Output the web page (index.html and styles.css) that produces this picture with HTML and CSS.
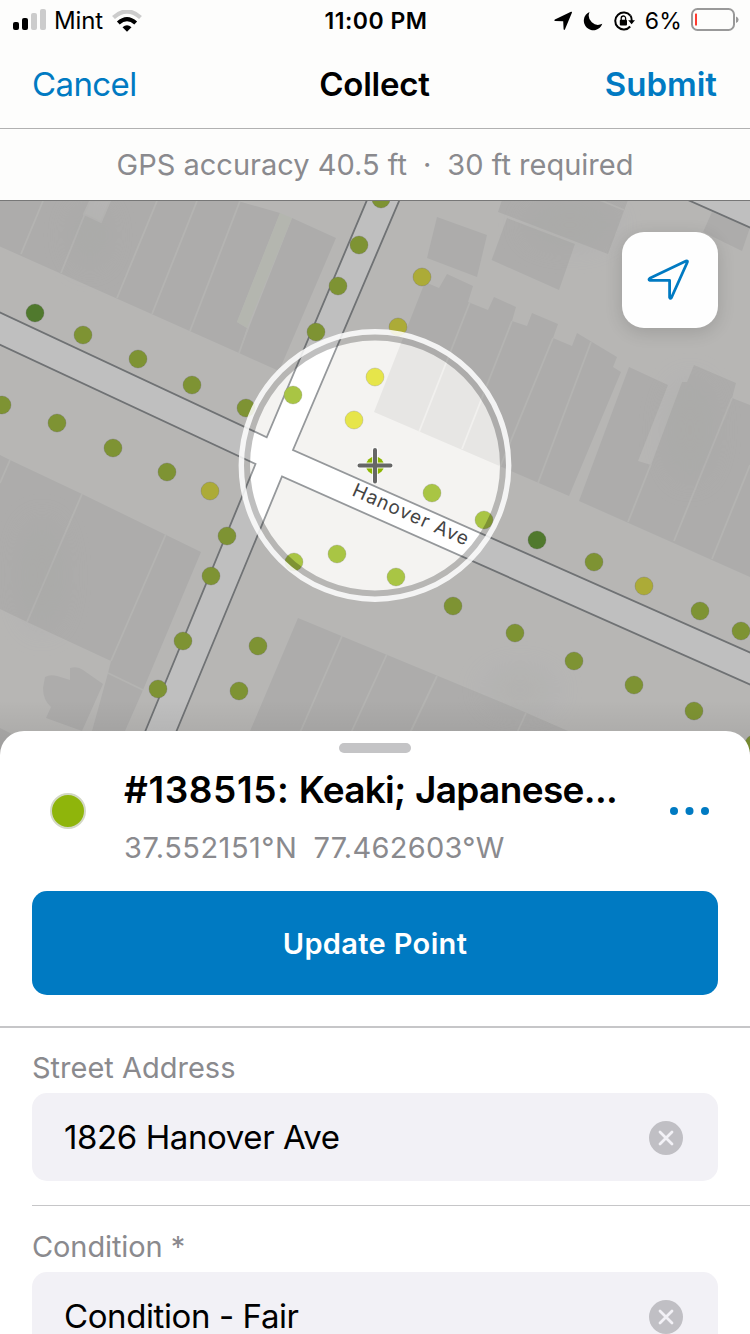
FILE: index.html
```
<!DOCTYPE html>
<html lang="en">
<head>
<meta charset="utf-8">
<title>Collect</title>
<link rel="stylesheet" href="styles.css">
</head>
<body>
<div class="screen">
  <header class="header">
    <div class="status">
      <div class="status-left">
        <svg class="signal" viewBox="0 0 34 22" width="34" height="22"><rect x="0" y="13" width="6" height="8" rx="2"/><rect x="9" y="9" width="6" height="12" rx="2"/><rect x="18" y="4" width="6" height="17" rx="2" fill="#ccc"/><rect x="27" y="0" width="6" height="21" rx="2" fill="#ccc"/></svg>
        <span class="carrier">Mint</span>
        <svg class="wifi" viewBox="0 0 30 22" width="30" height="22" fill="none"><path d="M1.500 7.500Q15 -4.500 28.500 7.500" stroke="#ccc" stroke-width="4.300"/><path d="M6.300 13Q15 5.200 23.700 13" stroke="#000" stroke-width="4.200"/><path d="M10.500 17.200Q15 13.300 19.500 17.200L15 21.800Z" fill="#000"/></svg>
      </div>
      <span class="clock">11:00 PM</span>
      <div class="status-right">
        <svg viewBox="0 0 20 20" width="20" height="20"><path d="M18 .8Q19.300 .4 18.900 1.800L12 18.200Q11.200 19.600 10.600 18.200L10.200 10.300L2 9.900Q.4 9.500 1.900 8.600Z"/></svg>
        <svg viewBox="0 0 20 20" width="20" height="20"><path d="M6.500 1A9.500 9.500 0 1 0 19.300 12.800A9.300 9.300 0 0 1 6.500 1Z"/></svg>
        <svg viewBox="0 0 22 20" width="22" height="20"><path d="M17.400 4.700A8.500 8.500 0 1 0 17.200 15.500" fill="none" stroke="#000" stroke-width="2"/><path d="M17.400 4.700Q18.800 6.300 18.800 10" fill="none" stroke="#000" stroke-width="2"/><path d="M15.200 9.200H22L18.600 13.200Z"/><rect x="6.800" y="8.800" width="7.200" height="5.800" rx="1"/><path d="M8.200 9V7.200a2.200 2.200 0 0 1 4.400 0V9" fill="none" stroke="#000" stroke-width="1.300"/></svg>
        <span class="percent">6%</span>
        <svg class="battery" viewBox="0 0 48 24" width="48" height="24"><rect x="1" y="1" width="42" height="21" rx="5.500" fill="none" stroke="#999" stroke-width="2"/><path d="M45 8.500Q47.600 9.500 47.600 11.800T45 15Z" fill="#999"/><rect x="4" y="5.500" width="2" height="12" rx=".6" fill="#ff3b30"/></svg>
      </div>
    </div>
    <nav class="nav">
      <a class="cancel">Cancel</a>
      <h1 class="heading">Collect</h1>
      <a class="submit">Submit</a>
    </nav>
    <div class="gps"><span class="accuracy">GPS accuracy 40.5 ft</span><span class="dot">·</span><span class="required">30 ft required</span></div>
  </header>

  <section class="map">
    <svg class="map-canvas" viewBox="0 201 750 560" width="750" height="560">
      <defs>
        <linearGradient id="sheet-shade" x1="0" y1="0" x2="0" y2="1"><stop offset="0" stop-opacity="0"/><stop offset="1" stop-opacity=".1"/></linearGradient>
        <filter id="soft" x="-50%" y="-50%" width="200%" height="200%"><feGaussianBlur stdDeviation="16"/></filter>
      </defs>
      <rect y="201" width="750" height="560" fill="#f4f3f1"/>
      <g class="buildings">
        <path d="M0 201H238L280 213 237 322 247 328 239 353 0 246.500Z"/>
        <path d="M292 218L336 238 279 371 239 353Z"/>
        <path d="M437 217L487 235 477 277 427 258Z"/>
        <path d="M502 200L498 212 608 254 628 200Z"/>
        <path d="M507 218L575 244 559 290 491.600 260Z"/>
        <path d="M712 212L750 227.500 742 251 703 232Z"/>
        <path d="M425 282L439 288 447 274 473 286 468 302 488 310 494 297 516 307 512 321 527 326 532 313 558 324 553 338 572 346 577 333 617 357 613 367 621 372 569 496 374 412Z"/>
        <path d="M629 367L668 385 638 461 651 465 682 382 687 382 694 365 736 383 732 398 750 405V577L579 501Z"/>
        <path d="M0 455L10 460 82 494 121 513 201 552 143 690 125 731H92L108 673 111 661 27 622 0 609Z"/>
        <path d="M45 677Q50 674 57 676L70 680V668Q78 666 83 670L103 684 82 731 46 718 51 707Q43 700 43 688Z"/>
        <path d="M0 728L12 734V750H0Z"/>
        <path d="M298 618L520 710 568 731V750H242Z"/>
      </g>
      <g class="seams">
        <path d="M43 201L21 254M86 211L61 273M157 201L117 298M197 201L152 314M240 201L190 331M248 328L239 353"/>
        <path d="M600 200L624 210M470 302L419 432M512 321L462 449M553 338L500 467M591 342L538 483M651 464L628 522M732 398L674 541M750 465L712 559"/>
        <path d="M10 460L0 483M82 494L27 622M166 534L111 661M108 673L143 690M342 636L299 735M387 654L350 735M437 676L409 735M526 713L516 735"/>
        <path class="alley" d="M90 201H110L101 222 84 214Z"/>
      </g>
      <path d="M280 213L292 218 247 328 237 322Z" fill="#f0f3ea"/>
      <g class="tints" filter="url(#soft)">
        <ellipse cx="90" cy="235" rx="16" ry="30"/><ellipse cx="42" cy="575" rx="18" ry="55"/><ellipse cx="570" cy="225" rx="45" ry="18"/><ellipse cx="520" cy="690" rx="35" ry="18"/><ellipse cx="690" cy="430" rx="20" ry="50"/>
      </g>
      <path d="M0 312.500L266.700 437.300 367 200H399.500L293 450 750 652.500V684.500L282 476.500 172 742H140L255.500 464 0 344.700ZM688 200L750 227.500V200Z" fill="#fff"/>
      <g class="curbs">
        <path d="M-2 311.600L266.700 437.300 367 200M399.500 200L293 450 752 653.400M752 685.400L282 476.500 172 742M140 744L255.500 464-2 343.800M688 200L752 228.400"/>
      </g>
      <text class="street" transform="translate(351 495) rotate(24)" textLength="125">Hanover Ave</text>
      <g class="trees">
        <circle cx="381" cy="199" r="9"/><circle cx="359" cy="245" r="9"/><circle cx="338" cy="286" r="9"/><circle cx="316" cy="332" r="9"/><circle cx="293" cy="395" r="9"/><circle cx="246" cy="408" r="9"/>
        <circle cx="83" cy="335" r="9"/><circle cx="138" cy="359" r="9"/><circle cx="192" cy="385" r="9"/><circle cx="2" cy="405" r="9"/><circle cx="57" cy="423" r="9"/><circle cx="113" cy="448" r="9"/><circle cx="167" cy="472" r="9"/>
        <circle cx="227" cy="536" r="9"/><circle cx="211" cy="576" r="9"/><circle cx="183" cy="641" r="9"/><circle cx="158" cy="689" r="9"/><circle cx="258" cy="646" r="9"/><circle cx="239" cy="691" r="9"/>
        <circle cx="294" cy="562" r="9"/><circle cx="337" cy="554" r="9"/><circle cx="396" cy="577" r="9"/><circle cx="432" cy="493" r="9"/><circle cx="484" cy="520" r="9"/><circle cx="453" cy="606" r="9"/><circle cx="515" cy="633" r="9"/><circle cx="574" cy="661" r="9"/><circle cx="634" cy="685" r="9"/><circle cx="694" cy="711" r="9"/><circle cx="594" cy="562" r="9"/><circle cx="700" cy="611" r="9"/><circle cx="741" cy="631" r="9"/><circle cx="754" cy="744" r="9"/>
        <g class="yellow"><circle cx="422" cy="277" r="9"/><circle cx="398" cy="327" r="9"/><circle cx="375" cy="377" r="9"/><circle cx="354" cy="420" r="9"/><circle cx="210" cy="491" r="9"/><circle cx="644" cy="586" r="9"/></g>
        <g class="dark"><circle cx="35" cy="313" r="9"/><circle cx="537" cy="540" r="9"/></g>
      </g>
      <path d="M0 201H750V761H0ZM375 340.500A125 125 0 1 0 375 590.500A125 125 0 1 0 375 340.500Z" fill-rule="evenodd" fill-opacity=".25"/>
      <circle cx="375" cy="465.500" r="133.700" fill="none" stroke="#fff" stroke-opacity=".85" stroke-width="5.400"/>
      <circle cx="375" cy="465.500" r="9" fill="#8db600"/>
      <path d="M375 447.500V483.500M357 465.500H393" stroke="#fff" stroke-width="6" stroke-opacity=".8"/>
      <path d="M375 450V481.500M359.500 465.500H390.500" stroke="#666" stroke-width="4" stroke-linecap="round"/>
      <rect y="700" width="750" height="61" fill="url(#sheet-shade)"/>
    </svg>
    <button class="locate" aria-label="My location">
      <svg viewBox="0 0 48 48" width="48" height="48" fill="none" stroke="#007ac2" stroke-width="2.800" stroke-linejoin="round"><path d="M40 6Q42 5.400 41.300 7.300L25.400 42.700Q24.200 44.300 23.600 42.400V25.400H4.100Q2 24.600 3.800 23.300Z" transform="translate(0 -1)"/></svg>
    </button>
  </section>

  <main class="sheet">
    <div class="handle"></div>
    <div class="feature">
      <span class="swatch"></span>
      <div class="feature-text">
        <h2 class="name"><span class="number">#138515:</span> <span class="genus">Keaki;</span> <span class="common">Japanese...</span></h2>
        <p class="coords"><span class="lat">37.552151°N</span><span class="lon">77.462603°W</span></p>
      </div>
      <svg class="more" viewBox="0 0 40 8" width="40" height="8" fill="#007ac2"><circle cx="4" cy="4" r="4"/><circle cx="19.500" cy="4" r="4"/><circle cx="35" cy="4" r="4"/></svg>
    </div>
    <button class="update"><span>Update Point</span></button>
    <section class="field">
      <label class="label address">Street Address</label>
      <div class="input"><span class="value">1826 Hanover Ave</span><svg viewBox="0 0 34 34" width="34" height="34"><circle cx="17" cy="17" r="17" fill="#c0bfc4"/><path d="M11 11L23 23M23 11L11 23" stroke="#f2f1f6" stroke-width="2.800" stroke-linecap="round"/></svg></div>
    </section>
    <section class="field">
      <label class="label condition">Condition *</label>
      <div class="input"><span class="value">Condition - Fair</span><svg viewBox="0 0 34 34" width="34" height="34"><circle cx="17" cy="17" r="17" fill="#c0bfc4"/><path d="M11 11L23 23M23 11L11 23" stroke="#f2f1f6" stroke-width="2.800" stroke-linecap="round"/></svg></div>
    </section>
  </main>
</div>
</body>
</html>
```

FILE: styles.css
```
* { box-sizing: border-box; margin: 0; padding: 0; }
body { font-family: Inter, "Liberation Sans", sans-serif; color: #000; background: #fff; overflow: hidden; }
svg { display: block; flex: none; }
button { border: 0; font: inherit; }
span, a, h1, h2 { white-space: nowrap; }
.screen { width: 750px; height: 1334px; overflow: hidden; display: flex; flex-direction: column; }

.header { height: 201px; flex: none; background: #fdfdfc; border-bottom: 1px solid #777; }
.status { height: 40px; padding: 1px 11px 0 13px; display: grid; grid-template-columns: 1fr auto 1fr; align-items: center; font-size: 23px; }
.status-left { display: flex; align-items: center; }
.signal { margin-top: -1px; }
.carrier { margin-left: 7px; font-size: 24px; letter-spacing: -.1px; }
.wifi { margin-left: 9px; }
.clock { font-weight: 600; font-size: 23px; letter-spacing: .5px; }
.status-right { display: flex; align-items: center; justify-content: flex-end; gap: 10px; }
.percent { letter-spacing: .2px; margin-right: -1px; }
.status-right .battery { margin-top: -1px; }
.nav { height: 89px; padding: 0 33px 0 32px; border-bottom: 1px solid #b1b1b1; display: grid; grid-template-columns: 1fr auto 1fr; align-items: center; font-size: 33px; color: #007ac2; }
.cancel { letter-spacing: -.6px; }
.heading { font-size: 33px; font-weight: 600; color: #000; letter-spacing: -.2px; }
.submit { text-align: right; font-weight: 600; }
.gps { height: 71px; display: flex; justify-content: center; align-items: center; gap: 16px; font-size: 29px; color: #8a8a8e; }

.map { height: 560px; flex: none; position: relative; overflow: hidden; }
.buildings { fill: #e7e6e4; }
.seams path { fill: none; stroke: #f1f0ee; stroke-width: 1.8; }
.seams .alley { fill: #f4f3f1; }
.tints { fill: #d8d9d8; opacity: .25; }
.curbs { fill: none; stroke: #95989b; stroke-width: 1.8; }
.trees { fill: #a9c544; stroke: #777; stroke-opacity: .25; stroke-width: 1; }
.yellow { fill: #e6e54a; }
.dark { fill: #6ba23c; }
.street { font-size: 19px; fill: #444; }
.locate { position: absolute; left: 622px; top: 31px; width: 96px; height: 96px; border-radius: 22px; background: #fefefe; box-shadow: 0 4px 18px rgba(0, 0, 0, .14); display: flex; align-items: center; justify-content: center; }

.sheet { position: relative; height: 603px; margin-top: -30px; flex: none; background: #fff; border-radius: 24px 24px 0 0; display: flex; flex-direction: column; overflow: hidden; }
.handle { width: 72px; height: 10px; margin: 12px auto 0; border-radius: 5px; background: #c4c4c6; flex: none; }
.feature { height: 138px; flex: none; padding: 21px 40px 0 50px; display: flex; align-items: flex-start; }
.swatch { width: 36px; height: 36px; margin-top: 19px; border-radius: 50%; background: #8fb50b; border: 2px solid #d3d8c5; }
.feature-text { margin-left: 38px; margin-top: -10px; flex: 1; }
.name { font-size: 37px; line-height: 52px; font-weight: 600; }
.number { letter-spacing: .6px; }
.genus { letter-spacing: -.7px; }
.common { letter-spacing: -.65px; }
.coords { display: flex; gap: 16px; margin-top: 12px; font-size: 29px; line-height: 40px; color: #8a8a8e; }
.lat { letter-spacing: .5px; }
.lon { letter-spacing: .3px; }
.more { margin-top: 33px; }
.update { height: 104px; margin: 0 32px 31px; border-radius: 15px; background: #007ac2; color: #fff; font-size: 29px; font-weight: 600; letter-spacing: .35px; flex: none; }
.field { margin-left: 32px; height: 179px; flex: none; border-top: 1px solid #c6c6c8; }
.update + .field { margin-left: 0; padding-left: 32px; border-top-width: 2px; }
.label { display: block; height: 66px; line-height: 82px; font-size: 29px; color: #8a8a8e; }
.condition { letter-spacing: -.1px; }
.update + .field .label { height: 65px; line-height: 80px; }
.input { height: 88px; margin-right: 32px; padding: 0 35px 0 32px; border-radius: 15px; background: #f2f1f6; display: flex; align-items: center; justify-content: space-between; font-size: 33px; letter-spacing: -.4px; }
.value { line-height: 32px; }
.input svg { margin-top: 2px; }
```
